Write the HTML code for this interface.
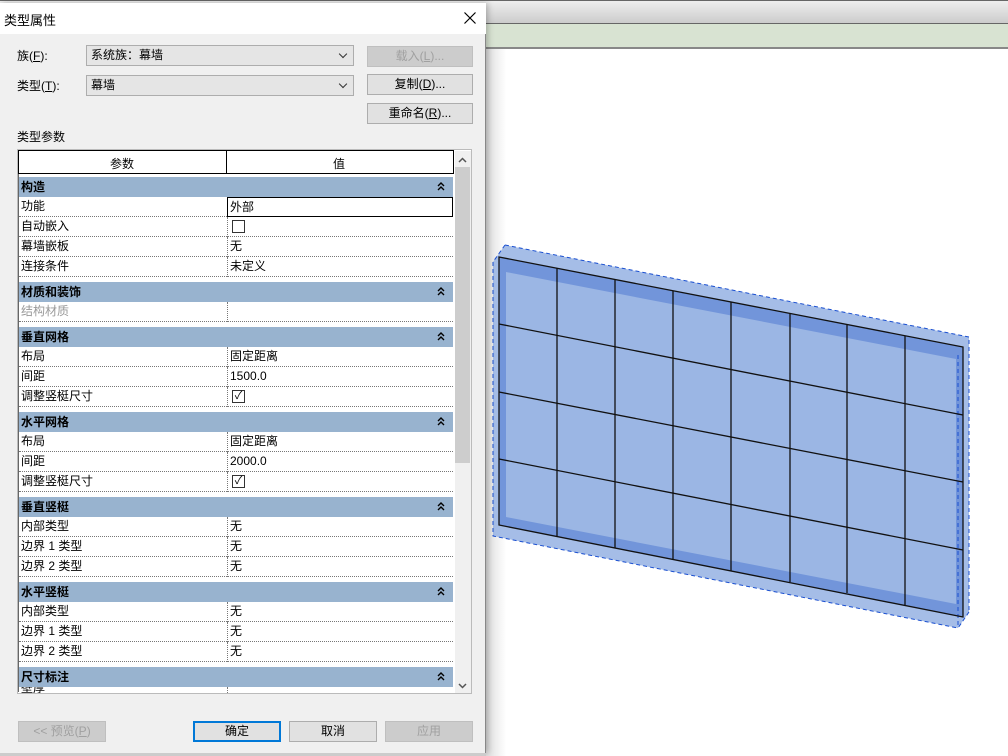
<!DOCTYPE html>
<html><head><meta charset="utf-8"><style>
*{margin:0;padding:0;box-sizing:border-box}
body{width:1008px;height:756px;overflow:hidden;background:#fff;position:relative;font-family:"Liberation Sans","Noto Sans CJK SC",sans-serif;font-size:12px;color:#000}
.a{position:absolute}
.dlg{left:0;top:3px;width:486px;height:750px;background:#f0f0f0;border-right:1px solid #888;box-shadow:2px 0 6px rgba(0,0,0,.25)}
.btn{position:absolute;height:21px;background:#e1e1e1;border:1px solid #adadad;text-align:center;line-height:19px;font-size:12px}
.dis{color:#a0a0a0;background:#cccccc;border-color:#bfbfbf}
.combo{position:absolute;height:21px;background:#e5e5e5;border:1px solid #adadad;padding-left:4px;line-height:19px}
.combo:after{content:"";position:absolute;right:7px;top:5px;width:5px;height:5px;border-right:1px solid #333;border-bottom:1px solid #333;transform:rotate(45deg)}
.row{position:absolute;left:19px;width:434px;height:20px;background:#fff;border-bottom:1px dotted #777;line-height:19px}
.row .k{position:absolute;left:2px}
.row .v{position:absolute;left:208px;top:0;height:20px;border-left:1px dotted #777;padding-left:2px;width:226px}
.grp{position:absolute;left:19px;width:434px;height:20px;background:#98b3cf;font-weight:bold;line-height:20px;padding-left:2px}
.grp svg{position:absolute;right:8px;top:5px}
.cb{position:absolute;left:4px;top:3px;width:13px;height:13px;border:1px solid #333;background:#fff;font-size:11px;line-height:11px;text-align:center}
</style></head><body>
<div class="a" style="left:0;top:0;width:1008px;height:24px;background:linear-gradient(#eee,#ccc);border-top:1px solid #666;border-bottom:1px solid #666"></div>
<div class="a" style="left:486px;top:24px;width:522px;height:25px;background:#d8e3d2;border-bottom:2px solid #888"></div>
<div class="a" style="left:486px;top:49px;width:20px;height:707px;background:linear-gradient(90deg,#ddd,#fff)"></div>

<svg class="a" style="left:0;top:0" width="1008" height="756">
<polygon points="505,245 969,337 969,612 958,628 493,536 493,262" fill="#9bb6e4" fill-opacity=".9"/>
<polygon points="499,257 963,347 963,617 499,525" fill="#7295da"/>
<polygon points="506,272 956,359 956,604 506,517" fill="#9bb6e4"/>
<g stroke="#1a4fd0" stroke-width="1" stroke-dasharray="4,3" fill="none">
<polyline points="505,245 969,337 969,612"/>
<polyline points="493,262 493,536 958,628"/>
<line x1="505" y1="245" x2="493" y2="262"/>
<line x1="969" y1="612" x2="958" y2="628"/>
<line x1="958" y1="355" x2="958" y2="628"/>
</g>
<g stroke="#111" stroke-width="1.3" fill="none">
<polygon points="499,257 963,347 963,617 499,525"/>
<line x1="557" y1="268" x2="557" y2="537"/>
<line x1="615" y1="279" x2="615" y2="548"/>
<line x1="673" y1="291" x2="673" y2="560"/>
<line x1="731" y1="302" x2="731" y2="571"/>
<line x1="790" y1="313" x2="790" y2="582"/>
<line x1="847" y1="324" x2="847" y2="593"/>
<line x1="905" y1="336" x2="905" y2="605"/>
<line x1="499" y1="324" x2="963" y2="415"/>
<line x1="499" y1="392" x2="963" y2="482"/>
<line x1="499" y1="459" x2="963" y2="550"/>
</g>
</svg>

<div class="a dlg"></div>
<div class="a" style="left:0;top:3px;width:486px;height:31px;background:#fff"></div>
<div class="a" style="left:4px;top:10px;font-size:13px">类型属性</div>
<svg class="a" style="left:464px;top:12px" width="12" height="12"><path d="M0.5 0.5L11.5 11.5M11.5 0.5L0.5 11.5" stroke="#000" stroke-width="1.2"/></svg>

<div class="a" style="left:17px;top:47px">族(<u>F</u>):</div>
<div class="combo" style="left:86px;top:45px;width:268px">系统族：幕墙</div>
<div class="a" style="left:17px;top:77px">类型(<u>T</u>):</div>
<div class="combo" style="left:86px;top:75px;width:268px">幕墙</div>
<div class="btn dis" style="left:367px;top:46px;width:106px">载入(<u>L</u>)...</div>
<div class="btn" style="left:367px;top:74px;width:106px">复制(<u>D</u>)...</div>
<div class="btn" style="left:367px;top:103px;width:106px">重命名(<u>R</u>)...</div>
<div class="a" style="left:17px;top:128px">类型参数</div>

<div class="a" style="left:17px;top:149px;width:455px;height:545px;background:#fff;border:1px solid #bbb"></div>
<div class="a" style="left:18px;top:150px;width:436px;height:24px;background:#fff;border:1px solid #000"></div>
<div class="a" style="left:226px;top:150px;width:1px;height:24px;background:#000"></div>
<div class="a" style="left:110px;top:155px">参数</div>
<div class="a" style="left:333px;top:155px">值</div>
<div class="a" style="left:18px;top:174px;width:1px;height:518px;background:#666"></div>
<div class="a" style="left:455px;top:151px;width:16px;height:542px;background:#f0f0f0"></div>
<div class="a" style="left:455px;top:167px;width:15px;height:296px;background:#cdcdcd"></div>
<svg class="a" style="left:458px;top:157px" width="9" height="6"><path d="M1 5L4.5 1.5L8 5" stroke="#555" stroke-width="1.5" fill="none"/></svg>
<svg class="a" style="left:458px;top:683px" width="9" height="6"><path d="M1 1L4.5 4.5L8 1" stroke="#555" stroke-width="1.5" fill="none"/></svg>

<div class="grp" style="top:177px">构造<svg width="8" height="9"><path d="M1 4L4 1L7 4M1 8L4 5L7 8" stroke="#000" stroke-width="1.4" fill="none"/></svg></div>
<div class="row" style="top:197px"><span class="k">功能</span><span class="v" style="border:1.5px solid #000">外部</span></div>
<div class="row" style="top:217px"><span class="k">自动嵌入</span><span class="v"><span class="cb"></span></span></div>
<div class="row" style="top:237px"><span class="k">幕墙嵌板</span><span class="v">无</span></div>
<div class="row" style="top:257px"><span class="k">连接条件</span><span class="v">未定义</span></div>
<div class="grp" style="top:282px">材质和装饰<svg width="8" height="9"><path d="M1 4L4 1L7 4M1 8L4 5L7 8" stroke="#000" stroke-width="1.4" fill="none"/></svg></div>
<div class="row" style="top:302px"><span class="k" style="color:#999">结构材质</span><span class="v"></span></div>
<div class="grp" style="top:327px">垂直网格<svg width="8" height="9"><path d="M1 4L4 1L7 4M1 8L4 5L7 8" stroke="#000" stroke-width="1.4" fill="none"/></svg></div>
<div class="row" style="top:347px"><span class="k">布局</span><span class="v">固定距离</span></div>
<div class="row" style="top:367px"><span class="k">间距</span><span class="v">1500.0</span></div>
<div class="row" style="top:387px"><span class="k">调整竖梃尺寸</span><span class="v"><span class="cb">✓</span></span></div>
<div class="grp" style="top:412px">水平网格<svg width="8" height="9"><path d="M1 4L4 1L7 4M1 8L4 5L7 8" stroke="#000" stroke-width="1.4" fill="none"/></svg></div>
<div class="row" style="top:432px"><span class="k">布局</span><span class="v">固定距离</span></div>
<div class="row" style="top:452px"><span class="k">间距</span><span class="v">2000.0</span></div>
<div class="row" style="top:472px"><span class="k">调整竖梃尺寸</span><span class="v"><span class="cb">✓</span></span></div>
<div class="grp" style="top:497px">垂直竖梃<svg width="8" height="9"><path d="M1 4L4 1L7 4M1 8L4 5L7 8" stroke="#000" stroke-width="1.4" fill="none"/></svg></div>
<div class="row" style="top:517px"><span class="k">内部类型</span><span class="v">无</span></div>
<div class="row" style="top:537px"><span class="k">边界 1 类型</span><span class="v">无</span></div>
<div class="row" style="top:557px"><span class="k">边界 2 类型</span><span class="v">无</span></div>
<div class="grp" style="top:582px">水平竖梃<svg width="8" height="9"><path d="M1 4L4 1L7 4M1 8L4 5L7 8" stroke="#000" stroke-width="1.4" fill="none"/></svg></div>
<div class="row" style="top:602px"><span class="k">内部类型</span><span class="v">无</span></div>
<div class="row" style="top:622px"><span class="k">边界 1 类型</span><span class="v">无</span></div>
<div class="row" style="top:642px"><span class="k">边界 2 类型</span><span class="v">无</span></div>
<div class="grp" style="top:667px">尺寸标注<svg width="8" height="9"><path d="M1 4L4 1L7 4M1 8L4 5L7 8" stroke="#000" stroke-width="1.4" fill="none"/></svg></div>
<div class="row" style="top:687px;height:6px;overflow:hidden;border:0"><span class="k" style="top:-8px">壁厚</span><span class="v"></span></div>

<div class="btn dis" style="left:18px;top:721px;width:88px">&lt;&lt; 预览(<u>P</u>)</div>
<div class="btn" style="left:193px;top:721px;width:88px;border:2px solid #0078d7;line-height:17px">确定</div>
<div class="btn" style="left:289px;top:721px;width:88px">取消</div>
<div class="btn dis" style="left:385px;top:721px;width:88px">应用</div>
<div class="a" style="left:0;top:753px;width:486px;height:3px;background:#ccc"></div>
</body></html>
